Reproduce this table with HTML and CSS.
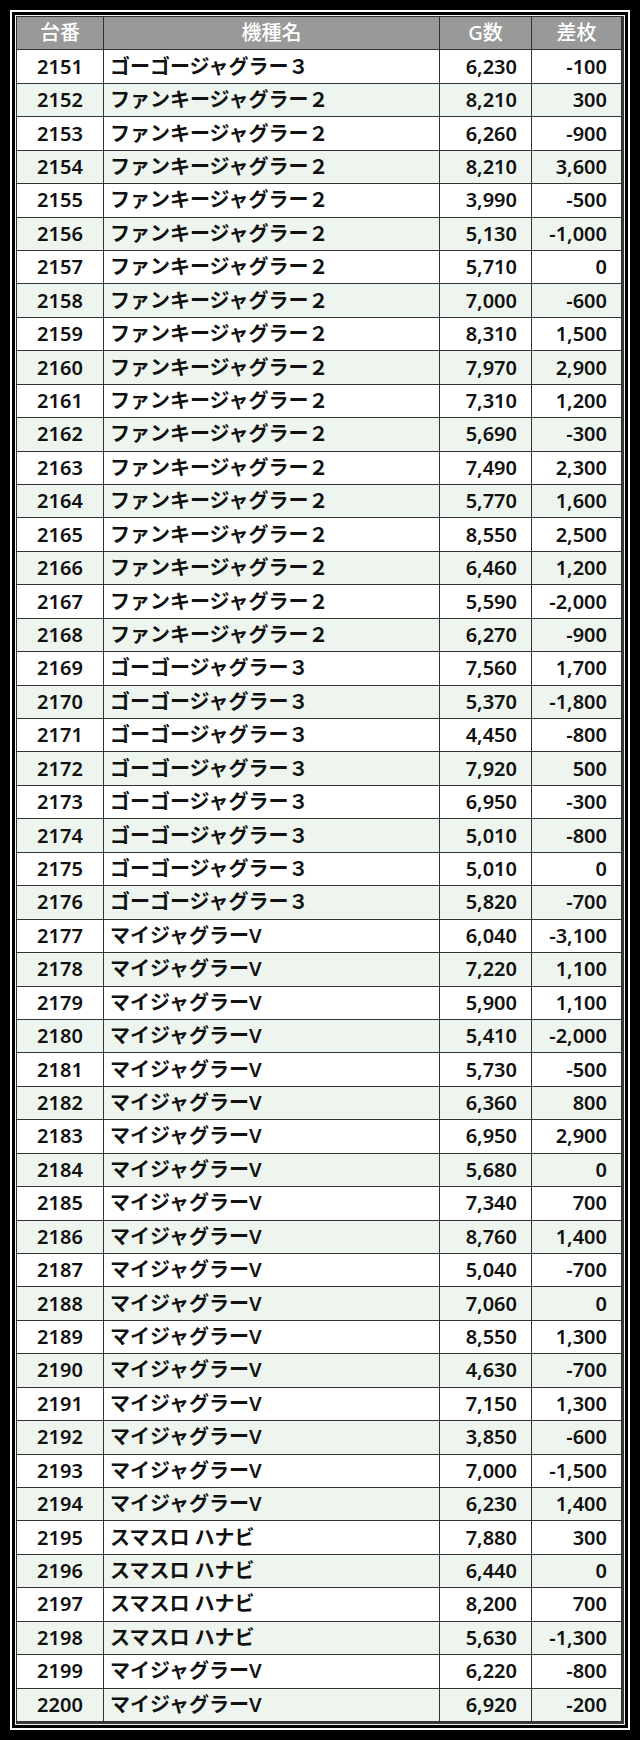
FILE: index.html
```html
<!DOCTYPE html>
<html lang="ja">
<head>
<meta charset="utf-8">
<title>台番データ</title>
<link rel="stylesheet" href="styles.css">
</head>
<body>
<div class="frame">
<div class="inner">
<div class="sheet">
<div class="h">台番</div><div class="h">機種名</div><div class="h">G数</div><div class="h">差枚</div>
<div class="c id">2151</div><div class="c nm">ゴーゴージャグラー３</div><div class="c nu">6,230</div><div class="c nu">-100</div>
<div class="c id g">2152</div><div class="c nm g">ファンキージャグラー２</div><div class="c nu g">8,210</div><div class="c nu g">300</div>
<div class="c id">2153</div><div class="c nm">ファンキージャグラー２</div><div class="c nu">6,260</div><div class="c nu">-900</div>
<div class="c id g">2154</div><div class="c nm g">ファンキージャグラー２</div><div class="c nu g">8,210</div><div class="c nu g">3,600</div>
<div class="c id">2155</div><div class="c nm">ファンキージャグラー２</div><div class="c nu">3,990</div><div class="c nu">-500</div>
<div class="c id g">2156</div><div class="c nm g">ファンキージャグラー２</div><div class="c nu g">5,130</div><div class="c nu g">-1,000</div>
<div class="c id">2157</div><div class="c nm">ファンキージャグラー２</div><div class="c nu">5,710</div><div class="c nu">0</div>
<div class="c id g">2158</div><div class="c nm g">ファンキージャグラー２</div><div class="c nu g">7,000</div><div class="c nu g">-600</div>
<div class="c id">2159</div><div class="c nm">ファンキージャグラー２</div><div class="c nu">8,310</div><div class="c nu">1,500</div>
<div class="c id g">2160</div><div class="c nm g">ファンキージャグラー２</div><div class="c nu g">7,970</div><div class="c nu g">2,900</div>
<div class="c id">2161</div><div class="c nm">ファンキージャグラー２</div><div class="c nu">7,310</div><div class="c nu">1,200</div>
<div class="c id g">2162</div><div class="c nm g">ファンキージャグラー２</div><div class="c nu g">5,690</div><div class="c nu g">-300</div>
<div class="c id">2163</div><div class="c nm">ファンキージャグラー２</div><div class="c nu">7,490</div><div class="c nu">2,300</div>
<div class="c id g">2164</div><div class="c nm g">ファンキージャグラー２</div><div class="c nu g">5,770</div><div class="c nu g">1,600</div>
<div class="c id">2165</div><div class="c nm">ファンキージャグラー２</div><div class="c nu">8,550</div><div class="c nu">2,500</div>
<div class="c id g">2166</div><div class="c nm g">ファンキージャグラー２</div><div class="c nu g">6,460</div><div class="c nu g">1,200</div>
<div class="c id">2167</div><div class="c nm">ファンキージャグラー２</div><div class="c nu">5,590</div><div class="c nu">-2,000</div>
<div class="c id g">2168</div><div class="c nm g">ファンキージャグラー２</div><div class="c nu g">6,270</div><div class="c nu g">-900</div>
<div class="c id">2169</div><div class="c nm">ゴーゴージャグラー３</div><div class="c nu">7,560</div><div class="c nu">1,700</div>
<div class="c id g">2170</div><div class="c nm g">ゴーゴージャグラー３</div><div class="c nu g">5,370</div><div class="c nu g">-1,800</div>
<div class="c id">2171</div><div class="c nm">ゴーゴージャグラー３</div><div class="c nu">4,450</div><div class="c nu">-800</div>
<div class="c id g">2172</div><div class="c nm g">ゴーゴージャグラー３</div><div class="c nu g">7,920</div><div class="c nu g">500</div>
<div class="c id">2173</div><div class="c nm">ゴーゴージャグラー３</div><div class="c nu">6,950</div><div class="c nu">-300</div>
<div class="c id g">2174</div><div class="c nm g">ゴーゴージャグラー３</div><div class="c nu g">5,010</div><div class="c nu g">-800</div>
<div class="c id">2175</div><div class="c nm">ゴーゴージャグラー３</div><div class="c nu">5,010</div><div class="c nu">0</div>
<div class="c id g">2176</div><div class="c nm g">ゴーゴージャグラー３</div><div class="c nu g">5,820</div><div class="c nu g">-700</div>
<div class="c id">2177</div><div class="c nm">マイジャグラーV</div><div class="c nu">6,040</div><div class="c nu">-3,100</div>
<div class="c id g">2178</div><div class="c nm g">マイジャグラーV</div><div class="c nu g">7,220</div><div class="c nu g">1,100</div>
<div class="c id">2179</div><div class="c nm">マイジャグラーV</div><div class="c nu">5,900</div><div class="c nu">1,100</div>
<div class="c id g">2180</div><div class="c nm g">マイジャグラーV</div><div class="c nu g">5,410</div><div class="c nu g">-2,000</div>
<div class="c id">2181</div><div class="c nm">マイジャグラーV</div><div class="c nu">5,730</div><div class="c nu">-500</div>
<div class="c id g">2182</div><div class="c nm g">マイジャグラーV</div><div class="c nu g">6,360</div><div class="c nu g">800</div>
<div class="c id">2183</div><div class="c nm">マイジャグラーV</div><div class="c nu">6,950</div><div class="c nu">2,900</div>
<div class="c id g">2184</div><div class="c nm g">マイジャグラーV</div><div class="c nu g">5,680</div><div class="c nu g">0</div>
<div class="c id">2185</div><div class="c nm">マイジャグラーV</div><div class="c nu">7,340</div><div class="c nu">700</div>
<div class="c id g">2186</div><div class="c nm g">マイジャグラーV</div><div class="c nu g">8,760</div><div class="c nu g">1,400</div>
<div class="c id">2187</div><div class="c nm">マイジャグラーV</div><div class="c nu">5,040</div><div class="c nu">-700</div>
<div class="c id g">2188</div><div class="c nm g">マイジャグラーV</div><div class="c nu g">7,060</div><div class="c nu g">0</div>
<div class="c id">2189</div><div class="c nm">マイジャグラーV</div><div class="c nu">8,550</div><div class="c nu">1,300</div>
<div class="c id g">2190</div><div class="c nm g">マイジャグラーV</div><div class="c nu g">4,630</div><div class="c nu g">-700</div>
<div class="c id">2191</div><div class="c nm">マイジャグラーV</div><div class="c nu">7,150</div><div class="c nu">1,300</div>
<div class="c id g">2192</div><div class="c nm g">マイジャグラーV</div><div class="c nu g">3,850</div><div class="c nu g">-600</div>
<div class="c id">2193</div><div class="c nm">マイジャグラーV</div><div class="c nu">7,000</div><div class="c nu">-1,500</div>
<div class="c id g">2194</div><div class="c nm g">マイジャグラーV</div><div class="c nu g">6,230</div><div class="c nu g">1,400</div>
<div class="c id">2195</div><div class="c nm">スマスロ ハナビ</div><div class="c nu">7,880</div><div class="c nu">300</div>
<div class="c id g">2196</div><div class="c nm g">スマスロ ハナビ</div><div class="c nu g">6,440</div><div class="c nu g">0</div>
<div class="c id">2197</div><div class="c nm">スマスロ ハナビ</div><div class="c nu">8,200</div><div class="c nu">700</div>
<div class="c id g">2198</div><div class="c nm g">スマスロ ハナビ</div><div class="c nu g">5,630</div><div class="c nu g">-1,300</div>
<div class="c id">2199</div><div class="c nm">マイジャグラーV</div><div class="c nu">6,220</div><div class="c nu">-800</div>
<div class="c id g">2200</div><div class="c nm g">マイジャグラーV</div><div class="c nu g">6,920</div><div class="c nu g">-200</div>
</div>
</div>
</div>
</body>
</html>
```

FILE: styles.css
```css
html, body {
  margin: 0;
  padding: 0;
  background: #000;
}
body {
  width: 640px;
  height: 1740px;
  font-family: "Noto Sans", "Noto Sans CJK JP", sans-serif;
}
.frame {
  margin: 10px;
  width: 620px;
  box-sizing: border-box;
  border: 2px solid #fff;
  padding: 3px;
}
.inner {
  border: 1px solid #f4f4f4;
}
.sheet {
  display: grid;
  grid-template-columns: 87px 336px 92px 1fr;
  grid-template-rows: repeat(51, 1fr);
  height: 1705px;
  border-top: 1px solid #333;
  border-left: 1px solid #333;
  border-right: 2px solid #3a3a3a;
  border-bottom: 2px solid #3a3a3a;
}
.h, .c {
  box-sizing: border-box;
  border-right: 1px solid #333;
  border-bottom: 1px solid #333;
  display: flex;
  align-items: center;
  font-size: 20px;
  line-height: 1;
  white-space: nowrap;
}
.h {
  background: #999;
  color: #fff;
  justify-content: center;
  font-weight: 500;
}
.c {
  background: #fff;
  color: #111;
  font-weight: 600;
}
.c.g {
  background: #edf5ee;
}
.id {
  justify-content: center;
}
.nm {
  justify-content: flex-start;
  padding-left: 6px;
}
.nu {
  justify-content: flex-end;
  padding-right: 14px;
}
```
